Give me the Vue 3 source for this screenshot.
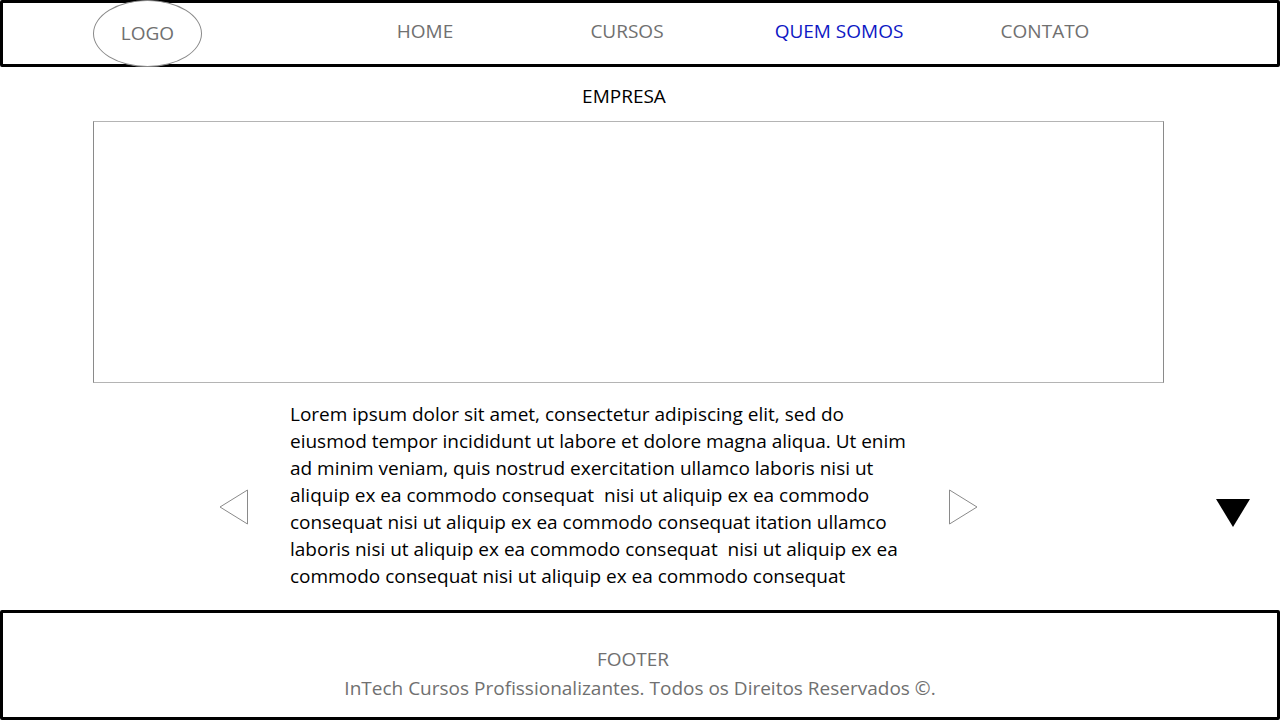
<script setup>
const links = [
  { label: 'HOME', href: '#home' },
  { label: 'CURSOS', href: '#cursos' },
  { label: 'QUEM SOMOS', href: '#quem-somos', active: true },
  { label: 'CONTATO', href: '#contato' },
]

const lines = [
  'Lorem ipsum dolor sit amet, consectetur adipiscing elit, sed do',
  'eiusmod tempor incididunt ut labore et dolore magna aliqua. Ut enim',
  'ad minim veniam, quis nostrud exercitation ullamco laboris nisi ut',
  'aliquip ex ea commodo consequat  nisi ut aliquip ex ea commodo',
  'consequat nisi ut aliquip ex ea commodo consequat itation ullamco',
  'laboris nisi ut aliquip ex ea commodo consequat  nisi ut aliquip ex ea',
  'commodo consequat nisi ut aliquip ex ea commodo consequat',
]
</script>

<template>
  <div class="page">
    <header class="header">
      <a class="logo" href="#home">LOGO</a>
      <nav class="nav" aria-label="Principal">
        <a
          v-for="link in links"
          :key="link.label"
          :href="link.href"
          :class="{ active: link.active }"
          :aria-current="link.active ? 'page' : null"
        >{{ link.label }}</a>
      </nav>
    </header>

    <main class="main">
      <h1 class="title">EMPRESA</h1>
      <div class="banner"></div>
      <section class="carousel">
        <button class="arrow prev" type="button" aria-label="Anterior">
          <svg width="30" height="36" viewBox="0 0 30 36">
            <path d="M28.5 1 L1 18 L28.5 35 Z" fill="#fff" stroke="#8a8a8a" />
          </svg>
        </button>
        <p class="text">
          <span v-for="line in lines" :key="line" class="line">{{ line }}</span>
        </p>
        <button class="arrow next" type="button" aria-label="Próximo">
          <svg width="30" height="36" viewBox="0 0 30 36">
            <path d="M1.5 1 L29 18 L1.5 35 Z" fill="#fff" stroke="#8a8a8a" />
          </svg>
        </button>
        <button class="arrow down" type="button" aria-label="Descer">
          <svg width="36" height="30" viewBox="0 0 36 30">
            <path d="M1 1 H35 L18 29 Z" fill="#000" />
          </svg>
        </button>
      </section>
    </main>

    <footer class="footer">
      <p class="footer-title">FOOTER</p>
      <p>InTech Cursos Profissionalizantes. Todos os Direitos Reservados ©.</p>
    </footer>
  </div>
</template>

<style>
body {
  margin: 0;
  background: #fff;
}
</style>

<style scoped>
.page {
  display: flex;
  flex-direction: column;
  min-height: 100vh;
  font-family: "Open Sans", "Noto Sans", sans-serif;
  font-size: 19px;
  line-height: 27px;
  color: #000;
}

p,
h1 {
  margin: 0;
  font-size: inherit;
  font-weight: 400;
}

a {
  color: #707070;
  text-decoration: none;
}

.header {
  position: relative;
  box-sizing: border-box;
  height: 67px;
  border: 3px solid #000;
  border-radius: 2px;
}

.logo {
  position: absolute;
  top: -3px;
  left: 90px;
  box-sizing: border-box;
  width: 109px;
  height: 67px;
  border: 1px solid #8a8a8a;
  border-radius: 50%;
  background: #fff;
  line-height: 65px;
  text-align: center;
}

.nav {
  display: grid;
  grid-template-columns: 202fr 202fr 222fr 190fr;
  margin: 0 137px 0 321px;
  padding-top: 15px;
  text-align: center;
}

.nav .active {
  color: #0e18c4;
}

.main {
  flex: 1;
}

.title {
  padding: 16px 32px 11px 0;
  text-align: center;
}

.banner {
  box-sizing: border-box;
  height: 262px;
  margin: 0 116px 0 93px;
  border: 1px solid #8a8a8a;
  border-top-color: #b4b4b4;
  border-bottom-color: #b4b4b4;
}

.carousel {
  display: flex;
  align-items: center;
  padding: 18px 29px 20px 219px;
}

.arrow {
  padding: 0;
  border: 0;
  background: none;
}

.arrow svg {
  display: block;
}

.prev,
.next {
  margin-top: 22px;
}

.text {
  flex: 0 1 699px;
  box-sizing: border-box;
  padding-left: 41px;
}

.line {
  display: block;
  white-space: pre;
}

.down {
  margin-top: 34px;
  margin-left: auto;
}

.footer {
  box-sizing: border-box;
  min-height: 110px;
  padding: 33px 0 12px;
  border: 3px solid #000;
  border-radius: 2px;
  color: #707070;
  text-align: center;
}

.footer-title {
  margin-bottom: 2px;
  padding-right: 14px;
}
</style>
